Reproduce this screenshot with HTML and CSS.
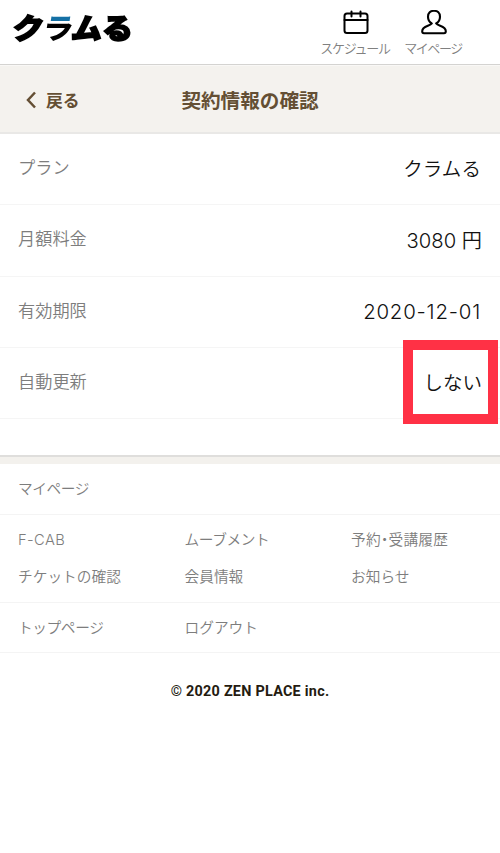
FILE: index.html
```html
<!DOCTYPE html>
<html lang="ja">
<head>
<meta charset="utf-8">
<meta name="viewport" content="width=device-width, initial-scale=1">
<title>契約情報の確認</title>
<link rel="stylesheet" href="styles.css">
</head>
<body>
<header class="site-header">
  <a class="logo"><span>ク</span><span class="logo-accent">ラ</span><span>ム</span><span>る</span></a>
  <nav class="site-nav">
    <a class="nav-item nav-schedule">
      <svg width="26" height="24" viewBox="0 0 26 24" fill="none" stroke="#000" stroke-width="2" stroke-linecap="round" stroke-linejoin="round"><rect x="1.500" y="3" width="23" height="19.500" rx="2.500"/><path d="M1.500 9.500h23M8.500 1v5M17.500 1v5"/></svg>
      <span>スケジュール</span>
    </a>
    <a class="nav-item nav-mypage">
      <svg width="26" height="25" viewBox="0 0 26 25" fill="none" stroke="#000" stroke-width="2.100" stroke-linejoin="round"><path d="M10.800 13.500C8.300 12 7 9.800 7 6.700C7 3 9.500 .8 13 .8S19 3 19 6.700C19 9.800 17.700 12 15.200 13.500C17 16.200 24.800 16 24.800 21.200Q24.800 23.200 23 23.200H3Q1.200 23.200 1.200 21.200C1.200 16 9 16.200 10.800 13.500Z"/></svg>
      <span>マイページ</span>
    </a>
  </nav>
</header>
<main>
  <div class="title-bar">
    <a class="back"><svg width="10" height="18" viewBox="0 0 10 18" fill="none" stroke="#644f34" stroke-width="2.500"><path d="M9 1.500L2 9l7 7.500"/></svg><span>戻る</span></a>
    <h1>契約情報の確認</h1>
  </div>
  <dl class="details">
    <div class="row"><dt>プラン</dt><dd class="plan">クラムる</dd></div>
    <div class="row"><dt>月額料金</dt><dd class="price">3080 円</dd></div>
    <div class="row"><dt>有効期限</dt><dd class="date">2020-12-01</dd></div>
    <div class="row highlighted"><dt>自動更新</dt><dd class="renew">しない</dd></div>
  </dl>
</main>
<footer>
  <div class="links"><a class="kana">マイページ</a></div>
  <div class="links">
    <a class="latin">F-CAB</a><a class="kana">ムーブメント</a><a class="history">予約・受講履歴</a>
    <a>チケットの確認</a><a>会員情報</a><a>お知らせ</a>
  </div>
  <div class="links"><a class="kana">トップページ</a><a>ログアウト</a></div>
  <p class="copyright">© 2020 ZEN PLACE inc.</p>
</footer>
</body>
</html>
```
FILE: styles.css
```css
* { box-sizing: border-box; }
body { margin: 0; background: #fff; color: #111; font-family: Inter, "Noto Sans CJK JP", sans-serif; }
.site-header { height: 65px; border-bottom: 1px solid #d4d3d1; display: flex; justify-content: space-between; padding-right: 38px; }
.logo { display: flex; height: 54px; align-items: center; padding-left: 13px; font: 900 31px/54px "Noto Sans CJK JP", sans-serif; color: #000; -webkit-text-stroke: 1.800px currentColor; transform: scaleY(.93); }
.logo span { display: block; width: 29.700px; transform: skewX(-8deg); }
.logo span:last-child { transform: none; }
.logo .logo-accent { color: transparent; background: linear-gradient(#1470a5 0 22px, #000 22px); -webkit-background-clip: text; background-clip: text; -webkit-text-stroke: 0; }
.site-nav { display: flex; gap: 14px; padding-top: 10px; }
.nav-item { display: flex; flex-direction: column; align-items: center; color: #808080; font-size: 13px; line-height: 20px; white-space: nowrap; font-weight: 350; }
.nav-item svg { height: 25px; flex: none; margin-bottom: 3px; position: relative; left: 1px; }
.nav-schedule { width: 70px; letter-spacing: -1.300px; }
.nav-mypage { width: 58px; letter-spacing: -1.400px; }
.title-bar { height: 69px; background: #f4f2ee; border-top: 1px solid #f9f8f6; border-bottom: 2px solid #e9e8e6; display: grid; grid-template-columns: 1fr auto 1fr; align-items: center; color: #644f34; }
.back { display: flex; align-items: center; gap: 10px; padding: 1px 0 0 26px; font-size: 16.800px; font-weight: 700; }
h1 { margin: 0; padding-top: 4px; font-size: 19.600px; line-height: 30px; font-weight: 700; }
.details { margin: 0; height: 321px; }
.row { height: 71.300px; border-bottom: 1px solid #f5f5f5; display: flex; align-items: center; justify-content: space-between; padding: 0 18px; position: relative; }
dt { color: #7d7d7d; font-size: 17.200px; font-weight: 350; padding-bottom: 5px; }
dd { margin: 0; font-size: 19.500px; line-height: 30px; font-weight: 350; }
.plan { letter-spacing: .1px; padding-right: 1px; }
.price { font-size: 20.200px; padding-top: 1px; }
.date { font-size: 20.400px; letter-spacing: .8px; padding-right: 1px; }
.highlighted::after { content: ""; box-sizing: border-box; position: absolute; right: 2px; top: -8px; width: 95px; height: 84px; border: 10px solid #ff3145; }
footer { border-top: 2px solid #dfdedc; box-shadow: inset 0 7px #f3f1ed; padding-top: 7px; }
.links { display: grid; grid-template-columns: 166.500px 166.500px 1fr; padding: 6px 0 6px 18px; border-bottom: 1px solid #f4f4f4; color: #7d7d7d; font-size: 14.700px; font-weight: 350; line-height: 37.500px; }
.links a { transform: translateY(1px); }
.kana { letter-spacing: -.4px; }
.latin { letter-spacing: .4px; }
.history { font-feature-settings: "palt"; letter-spacing: .25px; }
.copyright { margin: 26px 0 0; text-align: center; font: 700 14.400px/26px Roboto, sans-serif; letter-spacing: .25px; color: #241b10; }
```
